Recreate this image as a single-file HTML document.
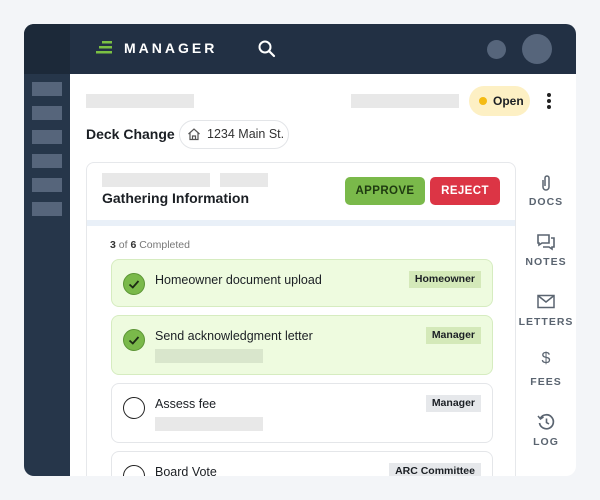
<!DOCTYPE html>
<html><head><style>
*{margin:0;padding:0;box-sizing:border-box}
body{width:600px;height:500px;background:#f3f5f8;font-family:"Liberation Sans",Arial,sans-serif;position:relative;overflow:hidden;color:#1b1f24}
.app{position:absolute;left:24px;top:24px;width:552px;height:452px;border-radius:10px;overflow:hidden;background:#fff}
.side{position:absolute;left:0;top:0;width:46px;height:452px;background:#26364a}
.sidetop{position:absolute;left:0;top:0;width:46px;height:50px;background:#1c2939}
.si{position:absolute;left:8px;width:30px;height:14px;background:#56657b}
.hdr{position:absolute;left:46px;top:0;right:0;height:50px;background:#223044}
.abs{position:absolute}
.ph{position:absolute;background:#e8e8e8}
.card{position:absolute;left:62px;top:138px;width:430px;height:330px;border:1px solid #e6e8eb;border-radius:8px;background:#fff}
.btn{position:absolute;top:14px;height:28px;border-radius:5px;font-size:11.5px;font-weight:bold;letter-spacing:.4px;text-align:center;line-height:28px}
.task{position:absolute;left:24px;width:382px;border-radius:8px;border:1px solid #e4e6e9}
.task.done{background:#eefbdf;border-color:#d6ecc0}
.tt{position:absolute;left:43px;top:13px;font-size:12.5px}
.tag{position:absolute;right:11px;top:11px;height:17px;padding:0 6px;font-size:10.5px;font-weight:bold;line-height:17px;background:#e6e8eb}
.done .tag{background:#d4e9b9}
.chk{position:absolute;left:11px;top:13px;width:22px;height:22px;border-radius:50%}
.rl{position:absolute;left:492px;width:60px;text-align:center;font-size:10.5px;font-weight:bold;color:#5a6470;letter-spacing:1px}
</style></head><body>
<div class="app">
 <div class="side"></div><div class="sidetop"></div>
 <div class="si" style="top:58px"></div><div class="si" style="top:82px"></div><div class="si" style="top:106px"></div><div class="si" style="top:130px"></div><div class="si" style="top:154px"></div><div class="si" style="top:178px"></div>
 <div class="hdr"></div>
 <svg class="abs" style="left:72px;top:16px" width="18" height="14"><rect x="6" y="1" width="10" height="2.5" fill="#7bc043"/><rect x="3" y="6" width="13" height="2.5" fill="#7bc043"/><rect x="0" y="11" width="16" height="2.5" fill="#7bc043"/></svg>
 <div class="abs" style="left:100px;top:16px;color:#fff;font-size:14px;font-weight:bold;letter-spacing:3px">MANAGER</div>
 <svg class="abs" style="left:233px;top:15px" width="20" height="20"><circle cx="8" cy="8" r="5.5" stroke="#fff" stroke-width="2" fill="none"/><line x1="12" y1="12" x2="17" y2="17" stroke="#fff" stroke-width="2.2" stroke-linecap="round"/></svg>
 <div class="abs" style="left:463px;top:16px;width:19px;height:19px;border-radius:50%;background:#56657b"></div>
 <div class="abs" style="left:498px;top:10px;width:30px;height:30px;border-radius:50%;background:#56657b"></div>

 <div class="ph" style="left:62px;top:70px;width:108px;height:14px"></div>
 <div class="ph" style="left:327px;top:70px;width:108px;height:14px"></div>
 <div class="abs" style="left:445px;top:62px;width:61px;height:30px;border-radius:15px;background:#fdf0c4"></div>
 <div class="abs" style="left:455px;top:73px;width:8px;height:8px;border-radius:50%;background:#f4bb13"></div>
 <div class="abs" style="left:469px;top:70px;font-size:12px;font-weight:bold">Open</div>
 <div class="abs" style="left:523px;top:69px;width:4px;height:4px;border-radius:50%;background:#222;box-shadow:0 6px 0 #222,0 12px 0 #222"></div>

 <div class="abs" style="left:62px;top:102px;font-size:14px;font-weight:bold">Deck Change</div>
 <div class="abs" style="left:155px;top:96px;width:110px;height:29px;border:1px solid #e3e5e8;border-radius:15px"></div>
 <svg class="abs" style="left:163px;top:103px" width="14" height="14"><path d="M1.5 7 L7 2 L12.5 7 M3 6 V12.5 H11 V6 M5.5 12.5 V9 H8.5 V12.5" stroke="#555" stroke-width="1.2" fill="none"/></svg>
 <div class="abs" style="left:183px;top:103px;font-size:12.5px;color:#333">1234 Main St.</div>

 <div class="card">
  <div class="ph" style="left:15px;top:10px;width:108px;height:14px"></div>
  <div class="ph" style="left:133px;top:10px;width:48px;height:14px"></div>
  <div class="abs" style="left:15px;top:27px;font-size:14px;font-weight:bold">Gathering Information</div>
  <div class="btn" style="left:258px;width:80px;background:#7ab94a;color:#1e3a10">APPROVE</div>
  <div class="btn" style="left:343px;width:70px;background:#dc3545;color:#fff">REJECT</div>
  <div class="abs" style="left:0;top:57px;width:428px;height:6px;background:#e9f0f8"></div>
  <div class="abs" style="left:23px;top:76px;font-size:10.5px;color:#777"><b style="color:#333">3</b> of <b style="color:#333">6</b> Completed</div>
  <div class="task done" style="top:96px;height:48px"><div class="chk" style="background:#7ab94a;border:1px solid #5c9535"><svg width="22" height="22" style="position:absolute;left:-1px;top:-1px"><path d="M6.5 11.5 L9.8 14.5 L15.5 8" stroke="#1c2b14" stroke-width="1.8" fill="none"/></svg></div><div class="tt">Homeowner document upload</div><div class="tag">Homeowner</div></div>
  <div class="task done" style="top:152px;height:60px"><div class="chk" style="background:#7ab94a;border:1px solid #5c9535"><svg width="22" height="22" style="position:absolute;left:-1px;top:-1px"><path d="M6.5 11.5 L9.8 14.5 L15.5 8" stroke="#1c2b14" stroke-width="1.8" fill="none"/></svg></div><div class="tt">Send acknowledgment letter</div><div class="tag">Manager</div><div class="ph" style="left:43px;top:33px;width:108px;height:14px;background:#d9e6cc"></div></div>
  <div class="task" style="top:220px;height:60px"><div class="chk" style="border:1.5px solid #222"></div><div class="tt">Assess fee</div><div class="tag">Manager</div><div class="ph" style="left:43px;top:33px;width:108px;height:14px"></div></div>
  <div class="task" style="top:288px;height:60px"><div class="chk" style="border:1.5px solid #222"></div><div class="tt">Board Vote</div><div class="tag">ARC Committee</div></div>
 </div>

 <svg class="abs" style="left:514px;top:150px" width="16" height="18"><path d="M5 6 V13 a3 3 0 0 0 6 0 V4 a2 2 0 0 0 -4 0 V12" stroke="#5a6470" stroke-width="1.5" fill="none"/></svg>
 <div class="rl" style="top:172px">DOCS</div>
 <svg class="abs" style="left:512px;top:209px" width="20" height="18"><path d="M2 2 H13 V10 H6 L3 12 V10 H2 Z M15 5 H18 V14 H16 V16 L13 14 H7" stroke="#5a6470" stroke-width="1.6" fill="none"/></svg>
 <div class="rl" style="top:232px">NOTES</div>
 <svg class="abs" style="left:513px;top:270px" width="18" height="15"><rect x="1" y="1.5" width="16" height="12" stroke="#5a6470" stroke-width="1.5" fill="none"/><path d="M1.5 2 L9 8 L16.5 2" stroke="#5a6470" stroke-width="1.5" fill="none"/></svg>
 <div class="rl" style="top:292px">LETTERS</div>
 <div class="abs" style="left:492px;top:326px;width:60px;text-align:center;font-size:16px;color:#5a6470">$</div>
 <div class="rl" style="top:352px">FEES</div>
 <svg class="abs" style="left:513px;top:389px" width="18" height="18"><path d="M3.5 5 A7 7 0 1 1 2.5 10" stroke="#5a6470" stroke-width="1.7" fill="none"/><path d="M1 3 L3.5 6 L6.5 4" stroke="#5a6470" stroke-width="1.5" fill="none"/><path d="M9.5 5.5 V9.5 L12 11" stroke="#5a6470" stroke-width="1.6" fill="none"/></svg>
 <div class="rl" style="top:412px">LOG</div>
</div>
</body></html>
